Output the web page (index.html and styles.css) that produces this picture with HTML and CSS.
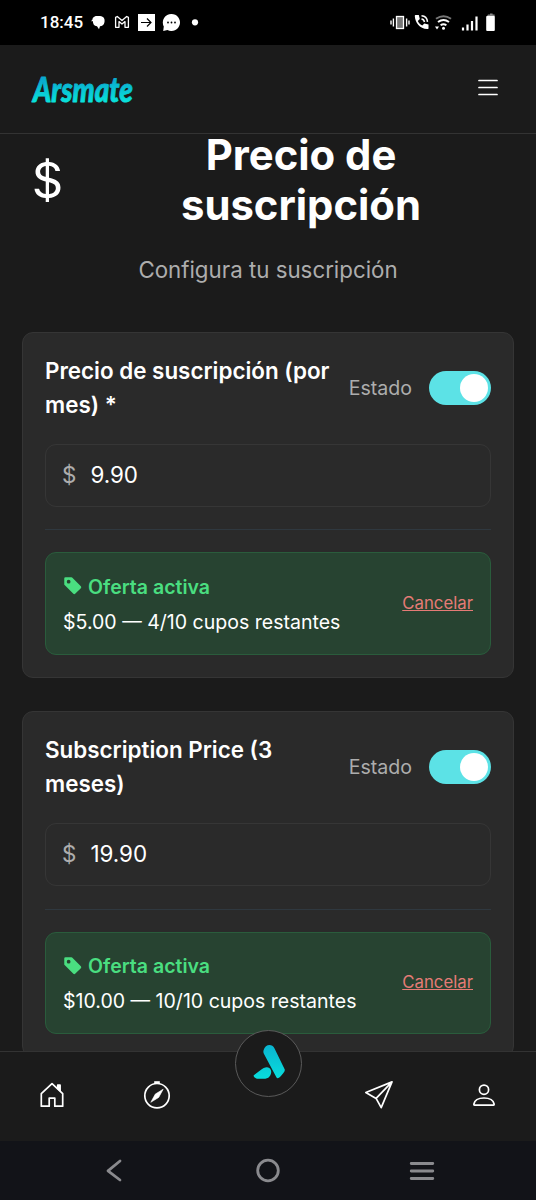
FILE: index.html
```html
<!DOCTYPE html>
<html lang="es">
<head>
<meta charset="utf-8">
<title>Precio de suscripción</title>
<link rel="stylesheet" href="styles.css">
</head>
<body>
<div class="phone">
  <div class="status">
    <span class="clock">18:45</span>
    <svg class="status-left" width="116" height="24" viewBox="0 0 116 24">
      <path d="M0.500 11.500C1 7 4 5.500 7 6h2c4 .4 5 3 4.500 6-.4 3-2.500 4.300-4.500 4.300L8 19.300 6 16.300C3 16 2 14 1.800 11z" fill="#fff"/>
      <path d="M1 10c.5-4 3-5 6-4.600" fill="none" stroke="#000" stroke-width=".6"/>
      <path d="M24.600 17.300V7.400l1.700-.9L31 10.500l4.700-4 1.700.9v9.900h-3.400v-5.700L31 14l-3-2.400v5.700z" fill="none" stroke="#fff" stroke-width="1.300" stroke-linejoin="round"/>
      <rect x="47" y="4" width="17" height="17" fill="#fff"/>
      <path d="M50 12.500h10M56 8.500l4 4-4 4" fill="none" stroke="#000" stroke-width="1.200"/>
      <path d="M80.500 4a8.500 8.500 0 1 1-4 16l-4.300 1 .6-4.500A8.500 8.500 0 0 1 80.500 4z" fill="#fff"/>
      <g fill="#000"><circle cx="77" cy="12.500" r=".9"/><circle cx="80.500" cy="12.500" r=".9"/><circle cx="84" cy="12.500" r=".9"/></g>
      <circle cx="104" cy="12.300" r="3.100" fill="#fff"/>
    </svg>
    <svg class="status-right" width="108" height="24" viewBox="0 0 108 24">
      <rect x="6.500" y="6.500" width="7" height="12" fill="#777" stroke="#fff" stroke-width="1.300"/>
      <path d="M3.400 8.500v8M16.600 8.500v8M1 10.500v4M19 10.500v4" stroke="#fff" stroke-width="1.400"/>
      <path d="M25.500 5h3.300l1 4-2 2c1 2.200 2.500 3.700 4.500 4.600l2-2 4.200 1v3.600c0 .6-.5 1-1.200.9C29.500 19 25 12 24.800 6c0-.6.200-1 .7-1z" fill="#fff"/>
      <path d="M31.500 9c1.700.2 2.700 1.300 3 3M31.500 5.800c3.500.2 5.600 2.400 6 6" fill="none" stroke="#fff" stroke-width="1.500"/>
      <path d="M46 8.800q7.500-5.200 15 0" fill="none" stroke="#777" stroke-width="2"/>
      <path d="M48 12q5.500-4 11 0M50.600 15.200q2.900-2 5.800 0" fill="none" stroke="#fff" stroke-width="2"/>
      <circle cx="53.500" cy="18.300" r="1.500" fill="#fff"/><path d="M45 16.500h4l-2 3z" fill="#fff"/>
      <path d="M73 17.500v3M77.500 14.500v6M82 11v9.500M86.500 6.500v14" stroke="#fff" stroke-width="2.200"/>
      <path d="M98 4.500h2V3.600h2.600v.9h2V7H96.400z" fill="#888"/><rect x="96.200" y="6" width="8.600" height="15" rx="1" fill="#fff"/>
    </svg>
  </div>

  <header class="header">
    <svg class="wordmark" width="112" height="54" viewBox="0 0 112 54" role="img" aria-label="Arsmate">
      <defs><linearGradient id="brand" gradientUnits="userSpaceOnUse" x1="0" y1="12" x2="0" y2="42"><stop offset="0.200" stop-color="#09a9cf"/><stop offset="1" stop-color="#09e4da"/></linearGradient></defs>
      <text class="wordmark-text" x="5" y="41" textLength="100" lengthAdjust="spacingAndGlyphs" fill="url(#brand)" stroke="url(#brand)">Arsmate</text>
    </svg>
    <svg width="22" height="20" viewBox="0 0 22 20"><path d="M2 2.500h18M2 9.500h18M2 16.500h18" stroke="#fff" stroke-width="1.700" stroke-linecap="round"/></svg>
  </header>

  <main class="content">
    <div class="heading">
      <svg class="dollar" viewBox="0 0 16 16" fill="#fff"><path d="M4 10.781c.148 1.667 1.513 2.850 3.591 3.003V15h1.043v-1.216c2.270-.179 3.678-1.438 3.678-3.300 0-1.590-.947-2.510-2.956-3.028l-.722-.187V3.467c1.122.110 1.879.714 2.070 1.616h1.470c-.166-1.600-1.540-2.748-3.540-2.875V1H7.591v1.233c-1.939.230-3.270 1.472-3.270 3.156 0 1.454.966 2.483 2.661 2.917l.610.162v4.031c-1.149-.170-1.940-.800-2.131-1.718H4zm3.391-3.836c-1.043-.263-1.600-.825-1.600-1.616 0-.944.704-1.641 1.800-1.828v3.495l-.200-.050zm1.591 1.872c1.287.323 1.852.859 1.852 1.769 0 1.097-.826 1.828-2.200 1.939V8.730l.348.086z"/></svg>
      <h1 class="title">Precio de<br>suscripción</h1>
    </div>
    <p class="subtitle">Configura tu suscripción</p>

    <section class="card">
      <div class="card-head">
        <h2 class="card-title">Precio de suscripción (por<br>mes) *</h2>
        <span class="state">Estado</span>
        <span class="toggle"><span class="knob"></span></span>
      </div>
      <div class="price"><span class="currency">$</span><span>9.90</span></div>
      <div class="divider"></div>
      <div class="offer">
        <div class="offer-info">
          <div class="offer-title"><svg class="tag" viewBox="0 0 16 16" fill="currentColor"><path d="M2 1a1 1 0 0 0-1 1v4.586a1 1 0 0 0 .293.707l7 7a1 1 0 0 0 1.414 0l4.586-4.586a1 1 0 0 0 0-1.414l-7-7A1 1 0 0 0 6.586 1zm4 3.500a1.500 1.500 0 1 1-3 0 1.500 1.500 0 0 1 3 0"/></svg>Oferta activa</div>
          <div class="offer-detail">$5.00 — 4/10 cupos restantes</div>
        </div>
        <a class="cancel">Cancelar</a>
      </div>
    </section>

    <section class="card">
      <div class="card-head">
        <h2 class="card-title">Subscription Price (3<br>meses)</h2>
        <span class="state">Estado</span>
        <span class="toggle"><span class="knob"></span></span>
      </div>
      <div class="price"><span class="currency">$</span><span>19.90</span></div>
      <div class="divider"></div>
      <div class="offer">
        <div class="offer-info">
          <div class="offer-title"><svg class="tag" viewBox="0 0 16 16" fill="currentColor"><path d="M2 1a1 1 0 0 0-1 1v4.586a1 1 0 0 0 .293.707l7 7a1 1 0 0 0 1.414 0l4.586-4.586a1 1 0 0 0 0-1.414l-7-7A1 1 0 0 0 6.586 1zm4 3.500a1.500 1.500 0 1 1-3 0 1.500 1.500 0 0 1 3 0"/></svg>Oferta activa</div>
          <div class="offer-detail">$10.00 — 10/10 cupos restantes</div>
        </div>
        <a class="cancel">Cancelar</a>
      </div>
    </section>
  </main>

  <nav class="tabs">
    <svg class="tab" viewBox="0 0 30 30"><path d="M4.300 26.200V13.600L15 3.600l10.700 10v12.600h-7.900v-8.100h-5.600v8.100z"/><path d="M20.700 5.200h2.400v5.300l-2.400-2.200z" fill="#fff"/></svg>
    <svg class="tab" viewBox="0 0 30 30"><circle cx="15" cy="15.700" r="12.200"/><path d="M12.200 2.600h5.600" stroke-width="2.800"/><path d="M21.200 9.200l-4.500 8.200-7.900 4.900 4.500-8.200z" fill="#fff" stroke-width=".6"/></svg>
    <div class="brand-button">
      <svg width="65" height="65" viewBox="0 0 66 66"><g fill="url(#mark)"><path d="M28 19.500c1.500-6 8.500-7 11-2L49.500 39c.8 2-4 7-6 8.500-1 .7-2 .4-2.500-.5L28.300 23c-.6-1.200-.6-2.300-.3-3.500z"/><path d="M18 45c4-3 9.500-8.500 13.500-8.300 5 .3 5.300 6 2.500 9.500-1.500 2-3.500 2.300-6 2.300h-5.500c-2 0-5-1.800-4.500-3.500z"/></g><defs><linearGradient id="mark" gradientUnits="userSpaceOnUse" x1="33" y1="13" x2="33" y2="49"><stop stop-color="#0ab3d0"/><stop offset="1" stop-color="#08dedd"/></linearGradient></defs></svg>
    </div>
    <svg class="tab" viewBox="0 0 30 30"><path d="M28 1.900L1.800 12.500l10.300 5.900 5.100 9.300zM28 1.900L12.100 18.400"/></svg>
    <svg class="tab" viewBox="0 0 30 30"><circle cx="15" cy="9.700" r="4.600"/><path d="M5.600 25.200c-.7 0-.8-.5-.7-1.200.7-3.600 4.700-6 10.100-6s9.400 2.400 10.100 6c.1.700 0 1.200-.7 1.200z"/></svg>
  </nav>

  <div class="system">
    <svg width="30" height="30" viewBox="0 0 30 30"><path d="M21 6L9 15.800 21 25"/></svg>
    <svg width="30" height="30" viewBox="0 0 30 30"><circle cx="15" cy="15.500" r="10.300"/></svg>
    <svg width="30" height="30" viewBox="0 0 30 30"><path d="M4.200 8.500h21.600M4.200 16h21.600M4.200 23.500h21.600"/></svg>
  </div>
</div>
</body>
</html>
```
FILE: styles.css
```css
* { box-sizing: border-box; }
body { margin: 0; background: #1b1b1b; color: #fff; font-family: Inter, sans-serif; }
.phone { display: flex; flex-direction: column; width: 536px; height: 1200px; overflow: hidden; }

.status { flex: none; display: flex; align-items: center; height: 45px; padding: 0 38px 0 40px; background: #000; }
.clock { width: 51px; margin-top: -2px; font: 500 17px/24px Roboto, sans-serif; }
.status-left { margin-top: -1px; }
.status-right { margin: -1px 0 0 auto; }

.header { flex: none; display: flex; align-items: center; justify-content: space-between; height: 89px; padding: 0 37px 3px 28px; border-bottom: 1px solid #333; }
.wordmark { overflow: visible; }
.wordmark-text { font: italic 900 34px Lato, sans-serif; stroke-width: .9px; stroke-linejoin: round; }

.content { flex: none; height: 917px; padding: 0 22px; }
.heading { display: flex; align-items: center; height: 100px; margin-top: -4px; }
.dollar { flex: none; width: 50px; height: 50px; }
.title { flex: 1; margin: 0 0 0 16px; font-size: 41.800px; font-weight: 700; line-height: 50px; text-align: center; }
.subtitle { margin: 23px 0 45px; color: #adadad; font-size: 22.300px; line-height: 34px; text-align: center; }

.card { height: 346px; margin-bottom: 33.400px; padding: 22px; border: 1px solid #353535; border-radius: 11px; background: #2a2a2a; }
.card-head { display: flex; align-items: center; height: 65px; }
.card-title { flex: 1; margin: 0; font-size: 22.400px; font-weight: 600; line-height: 33.600px; white-space: nowrap; }
.state { margin-right: 17px; color: #adadad; font-size: 19.600px; }
.toggle { display: flex; justify-content: flex-end; width: 62px; height: 34px; margin-top: 1px; padding: 3px; border-radius: 17px; background: #5ce2e6; }
.knob { width: 28px; height: 28px; border-radius: 50%; background: #fff; }
.price { display: flex; align-items: center; gap: 14px; height: 63px; margin-top: 24px; padding: 0 16px 2px; border: 1px solid #363636; border-radius: 11px; font-size: 22.400px; }
.currency { color: #adadad; }
.divider { height: 1px; margin: 22.200px 0 22px; background: #2f383f; }
.offer { display: flex; align-items: center; justify-content: space-between; height: 102.600px; padding: 0 17px; border: 1px solid #2a5c3c; border-radius: 11px; background: #274331; font-size: 19.550px; line-height: 35px; }
.offer-info { padding-top: 2.400px; }
.offer-title { display: flex; align-items: center; gap: 5px; color: #4ade80; font-weight: 600; }
.tag { width: 20px; height: 20px; margin-top: -2px; }
.cancel { color: #e57b76; font-size: 16.800px; text-decoration: underline; }

.tabs { position: relative; flex: none; display: grid; grid-template-columns: 30px 30px 67px 30px 30px; align-items: center; justify-content: space-between; justify-items: center; height: 90px; padding: 0 37px 4px; border-top: 1px solid #333; background: #1b1b1b; }
.tab { width: 30px; height: 30px; fill: none; stroke: #fff; stroke-width: 1.700; stroke-linejoin: round; }
.tab:nth-child(2) { margin-left: 13px; }
.tab:nth-child(4) { margin-right: 13px; }
.brand-button { width: 67px; height: 67px; margin-top: -63px; border: 1px solid #5a5a5a; border-radius: 50%; background: #1b1b1b; }

.system { flex: 1; display: flex; align-items: center; justify-content: space-between; padding: 0 99px 2px; background: #121318; }
.system svg { fill: none; stroke: #8a8a8e; stroke-width: 2.800; stroke-linecap: round; stroke-linejoin: round; }
```
